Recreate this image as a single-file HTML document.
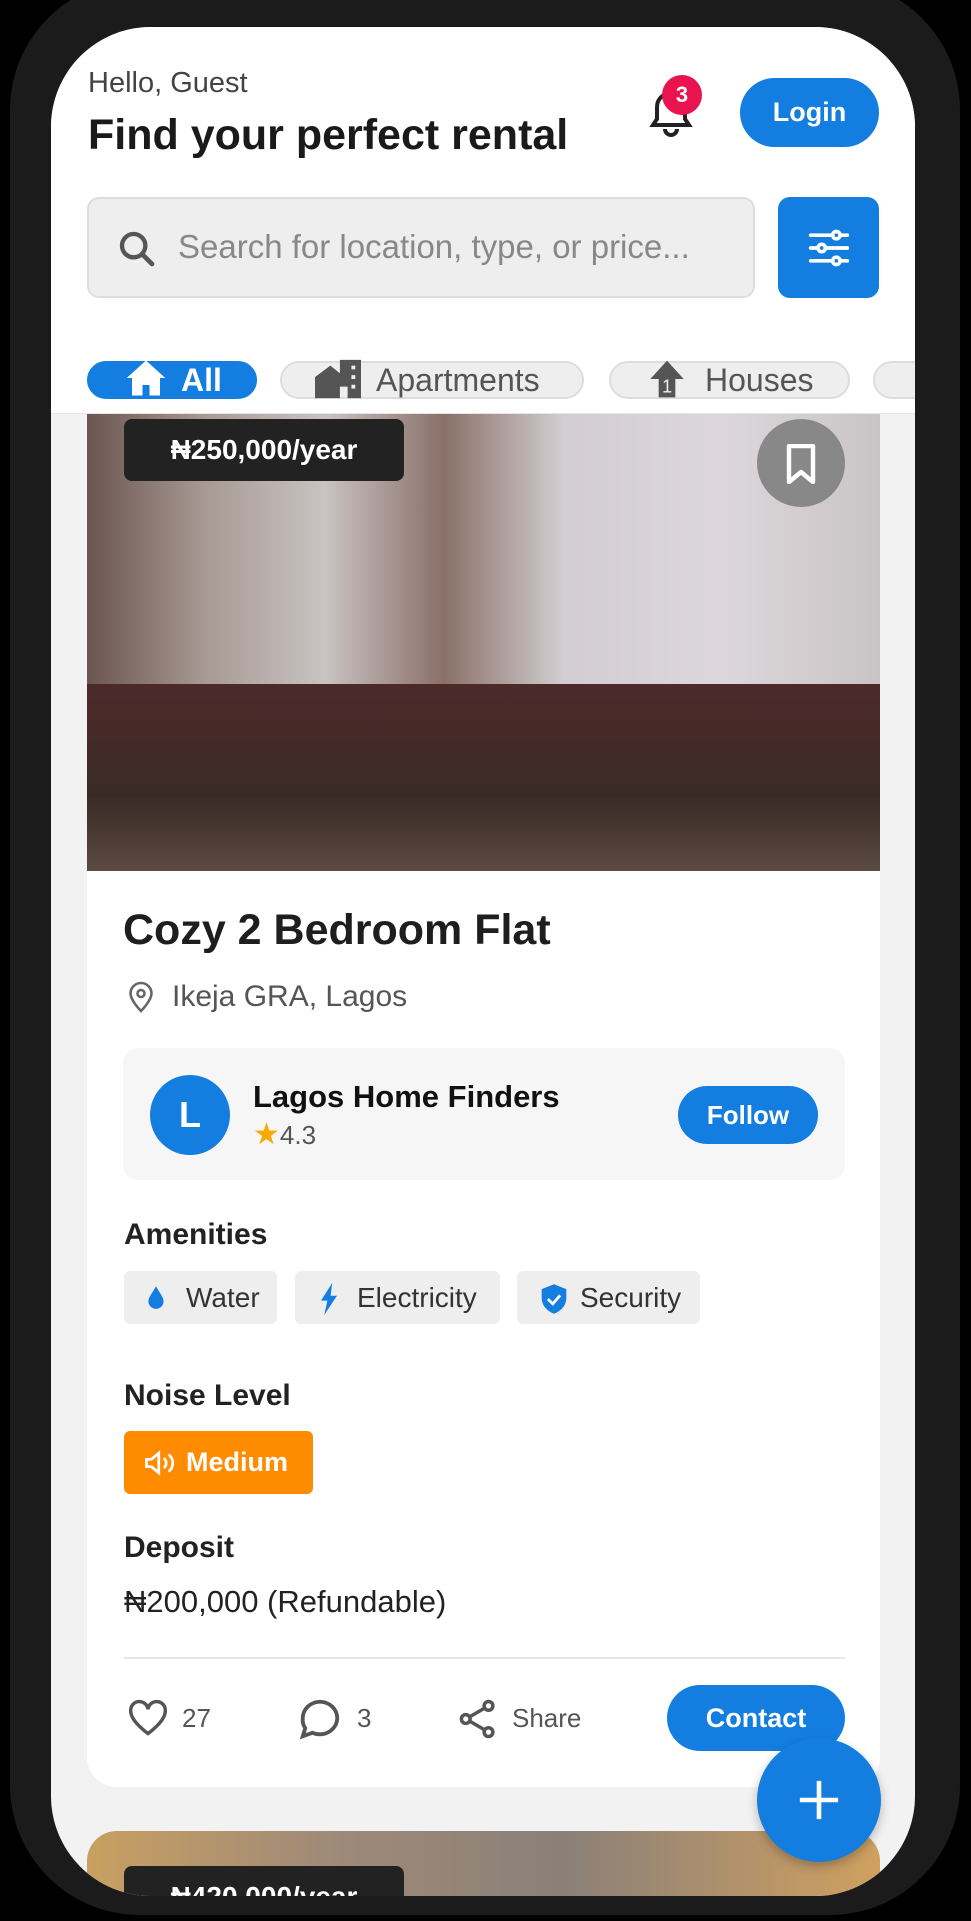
<!DOCTYPE html>
<html><head><meta charset="utf-8"><style>
*{margin:0;padding:0;box-sizing:border-box}
body{width:971px;height:1921px;background:#000;font-family:"Liberation Sans",sans-serif;position:relative;overflow:hidden}
.frame{position:absolute;left:10px;top:-20px;width:950px;height:1935px;background:#1b1b1b;border-radius:130px}
.screen{position:absolute;left:51px;top:27px;width:864px;height:1869px;background:#f2f2f2;border-radius:100px;overflow:hidden}
.abs{position:absolute}
.head{position:absolute;left:0;top:0;width:864px;height:387px;background:#fff;border-bottom:1px solid #e6e6e6}
.chip{position:absolute;top:334px;height:38px;border-radius:19px;background:#eee;border:2px solid #ddd;font-size:32px;color:#555;display:flex;align-items:center;padding-left:34px}
.card{position:absolute;left:36px;top:387px;width:793px;height:1373px;background:#fff;border-radius:0 0 30px 30px;overflow:hidden}
.am{position:absolute;height:53px;background:#eee;border-radius:6px;font-size:28px;color:#333;display:flex;align-items:center}
.lbl{position:absolute;left:37px;font-weight:bold;font-size:30px;color:#222}
</style></head><body>
<div class="frame"></div>
<div class="screen">
 <div class="head">
  <div class="abs" style="left:37px;top:40px;font-size:29px;color:#444">Hello, Guest</div>
  <div class="abs" style="left:37px;top:84px;font-size:43px;font-weight:bold;color:#1a1a1a">Find your perfect rental</div>
  <svg class="abs" style="left:596px;top:60px" width="48" height="56" viewBox="0 0 24 28"><path d="M12 3a7 7 0 0 0-7 7v6l-2 3h18l-2-3v-6a7 7 0 0 0-7-7zM9 21a3 3 0 0 0 6 0" fill="none" stroke="#222" stroke-width="2"/></svg>
  <div class="abs" style="left:611px;top:48px;width:40px;height:40px;border-radius:50%;background:#e8134f;color:#fff;font-weight:bold;font-size:22px;text-align:center;line-height:40px">3</div>
  <div class="abs" style="left:689px;top:51px;width:139px;height:69px;border-radius:35px;background:#137ee0;color:#fff;font-weight:bold;font-size:27px;text-align:center;line-height:69px">Login</div>
  <div class="abs" style="left:36px;top:170px;width:668px;height:101px;border-radius:12px;background:#eee;border:2px solid #ddd"></div>
  <svg class="abs" style="left:66px;top:202px" width="40" height="40" viewBox="0 0 24 24"><circle cx="10" cy="10" r="7" fill="none" stroke="#555" stroke-width="2.6"/><path d="M15 15l6 6" stroke="#555" stroke-width="2.8" stroke-linecap="round"/></svg>
  <div class="abs" style="left:127px;top:201px;font-size:33px;color:#888">Search for location, type, or price...</div>
  <div class="abs" style="left:727px;top:170px;width:101px;height:101px;border-radius:12px;background:#137ee0"></div>
  <svg class="abs" style="left:756px;top:199px" width="44" height="44" viewBox="0 0 24 24" stroke="#fff" stroke-width="2" fill="none" stroke-linecap="round"><path d="M2 5h20M2 12h20M2 19h20"/><circle cx="16" cy="5" r="2" fill="#137ee0"/><circle cx="8" cy="12" r="2" fill="#137ee0"/><circle cx="16" cy="19" r="2" fill="#137ee0"/></svg>
  <div class="chip" style="left:36px;width:170px;background:#137ee0;border-color:#137ee0;color:#fff;font-weight:bold;padding-left:92px">All</div>
  <svg class="abs" style="left:74px;top:329px" width="42" height="44" viewBox="0 0 24 24"><path d="M12 2L1 12h3v10h6v-6h4v6h6V12h3z" fill="#fff"/></svg>
  <div class="chip" style="left:229px;width:304px;padding-left:94px">Apartments</div>
  <svg class="abs" style="left:264px;top:332px" width="46" height="40" viewBox="0 0 24 20"><path d="M0 20V9l8-6 5 4V0h11v20h-7v-6h-4v6z" fill="#555"/><path d="M19 3h2v2h-2zM19 8h2v2h-2zM19 13h2v2h-2z" fill="#eee"/></svg>
  <div class="chip" style="left:558px;width:241px;padding-left:94px">Houses</div>
  <svg class="abs" style="left:596px;top:332px" width="40" height="40" viewBox="0 0 24 24"><path d="M12 1L2 12h5v11h10V12h5z" fill="#555"/><text x="9" y="20" font-size="11" fill="#eee" font-family="Liberation Sans">1</text></svg>
  <div class="chip" style="left:822px;width:80px"></div>
 </div>
 <div class="card">
  <div class="abs" style="left:0;top:0;width:793px;height:457px;background:linear-gradient(90deg,#6b5550 0%,#a89a94 15%,#c9c3c2 30%,#8a7068 45%,#d2cdd0 60%,#dcd7da 80%,#c9c4c6 100%)"></div>
  <div class="abs" style="left:0;top:270px;width:793px;height:187px;background:linear-gradient(180deg,#4d2a2a,#3a2a26 60%,#5a4a40)"></div>
  <div class="abs" style="left:37px;top:5px;width:280px;height:62px;border-radius:8px;background:#222;color:#fff;font-weight:bold;font-size:28px;text-align:center;line-height:62px">₦250,000/year</div>
  <div class="abs" style="left:670px;top:5px;width:88px;height:88px;border-radius:50%;background:#888"></div>
  <svg class="abs" style="left:698px;top:30px" width="32" height="40" viewBox="0 0 16 20"><path d="M2 1h12v18l-6-5-6 5z" fill="none" stroke="#fff" stroke-width="2.2" stroke-linejoin="round"/></svg>
  <div class="abs" style="left:36px;top:492px;font-size:43px;font-weight:bold;color:#1e1e1e">Cozy 2 Bedroom Flat</div>
  <svg class="abs" style="left:40px;top:566px" width="28" height="34" viewBox="0 0 24 28"><path d="M12 26s9-9 9-15a9 9 0 0 0-18 0c0 6 9 15 9 15z" fill="none" stroke="#666" stroke-width="2.2"/><circle cx="12" cy="11" r="3" fill="none" stroke="#666" stroke-width="2.2"/></svg>
  <div class="abs" style="left:85px;top:566px;font-size:30px;color:#555">Ikeja GRA, Lagos</div>
  <div class="abs" style="left:36px;top:634px;width:722px;height:132px;border-radius:15px;background:#f6f6f6"></div>
  <div class="abs" style="left:63px;top:661px;width:80px;height:80px;border-radius:50%;background:#137ee0;color:#fff;font-weight:bold;font-size:36px;text-align:center;line-height:80px">L</div>
  <div class="abs" style="left:166px;top:665px;font-size:31px;font-weight:bold;color:#111">Lagos Home Finders</div>
  <div class="abs" style="left:166px;top:703px;font-size:26px;color:#555"><span style="color:#f8a800;font-size:30px">★</span>4.3</div>
  <div class="abs" style="left:591px;top:672px;width:140px;height:58px;border-radius:29px;background:#137ee0;color:#fff;font-weight:bold;font-size:26px;text-align:center;line-height:58px">Follow</div>
  <div class="lbl" style="top:804px">Amenities</div>
  <div class="am" style="left:37px;top:857px;width:153px;padding-left:62px">Water</div>
  <svg class="abs" style="left:58px;top:871px" width="22" height="26" viewBox="0 0 20 24"><path d="M10 1C7 7 3 11 3 15a7 7 0 0 0 14 0c0-4-4-8-7-14z" fill="#137ee0"/></svg>
  <div class="am" style="left:208px;top:857px;width:205px;padding-left:62px">Electricity</div>
  <svg class="abs" style="left:232px;top:869px" width="20" height="32" viewBox="0 0 12 20"><path d="M8 0L1 11h4l-2 9 8-12H7z" fill="#137ee0"/></svg>
  <div class="am" style="left:430px;top:857px;width:183px;padding-left:63px">Security</div>
  <svg class="abs" style="left:452px;top:869px" width="30" height="32" viewBox="0 0 24 26"><path d="M12 1L2 5v7c0 7 5 11 10 13 5-2 10-6 10-13V5z" fill="#137ee0"/><path d="M7 13l4 4 6-7" fill="none" stroke="#fff" stroke-width="2.2"/></svg>
  <div class="lbl" style="top:965px">Noise Level</div>
  <div class="abs" style="left:37px;top:1017px;width:189px;height:63px;border-radius:6px;background:#ff8c00;color:#fff;font-weight:bold;font-size:27px;line-height:63px;padding-left:62px">Medium</div>
  <svg class="abs" style="left:57px;top:1036px" width="32" height="26" viewBox="0 0 26 20" fill="none" stroke="#fff" stroke-width="2.2"><path d="M2 7h4l6-5v16l-6-5H2z"/><path d="M16 6a5 5 0 0 1 0 8M20 3a9 9 0 0 1 0 14"/></svg>
  <div class="lbl" style="top:1117px">Deposit</div>
  <div class="abs" style="left:37px;top:1170px;font-size:31px;color:#222">₦200,000 (Refundable)</div>
  <div class="abs" style="left:37px;top:1243px;width:721px;height:2px;background:#e6e6e6"></div>
  <svg class="abs" style="left:40px;top:1285px" width="42" height="38" viewBox="0 0 24 22"><path d="M12 20S2 13 2 7a5 5 0 0 1 10-1 5 5 0 0 1 10 1c0 6-10 13-10 13z" fill="none" stroke="#555" stroke-width="2"/></svg>
  <div class="abs" style="left:95px;top:1289px;font-size:26px;color:#555">27</div>
  <svg class="abs" style="left:210px;top:1282px" width="46" height="46" viewBox="0 0 24 24"><path d="M12 3c5 0 9 4 9 8.5S17 20 12 20c-1.5 0-2.8-.3-4-.8L3 21l1.3-4.2A8 8 0 0 1 3 11.5C3 7 7 3 12 3z" fill="none" stroke="#555" stroke-width="2"/></svg>
  <div class="abs" style="left:270px;top:1289px;font-size:26px;color:#555">3</div>
  <svg class="abs" style="left:370px;top:1283px" width="42" height="44" viewBox="0 0 24 24" fill="none" stroke="#555" stroke-width="2"><circle cx="18" cy="4.5" r="2.5"/><circle cx="5" cy="12" r="2.5"/><circle cx="18" cy="19.5" r="2.5"/><path d="M7.2 10.8l8.6-5M7.2 13.2l8.6 5"/></svg>
  <div class="abs" style="left:425px;top:1289px;font-size:26px;color:#555">Share</div>
  <div class="abs" style="left:580px;top:1271px;width:178px;height:66px;border-radius:33px;background:#137ee0;color:#fff;font-weight:bold;font-size:27px;text-align:center;line-height:66px">Contact</div>
 </div>
 <div class="abs" style="left:36px;top:1804px;width:793px;height:100px;border-radius:30px 30px 0 0;background:linear-gradient(90deg,#c8a060,#a08a78 30%,#8a8078 60%,#d0a060)"></div>
 <div class="abs" style="left:73px;top:1839px;width:280px;height:62px;border-radius:8px;background:#222;color:#fff;font-weight:bold;font-size:28px;text-align:center;line-height:62px">₦420,000/year</div>
 <div class="abs" style="left:706px;top:1711px;width:124px;height:124px;border-radius:50%;background:#137ee0;box-shadow:0 4px 10px rgba(0,0,0,.25)"></div>
 <svg class="abs" style="left:745px;top:1750px" width="46" height="46" viewBox="0 0 24 24"><path d="M12 2v20M2 12h20" stroke="#fff" stroke-width="2.4"/></svg>
</div>
</body></html>
